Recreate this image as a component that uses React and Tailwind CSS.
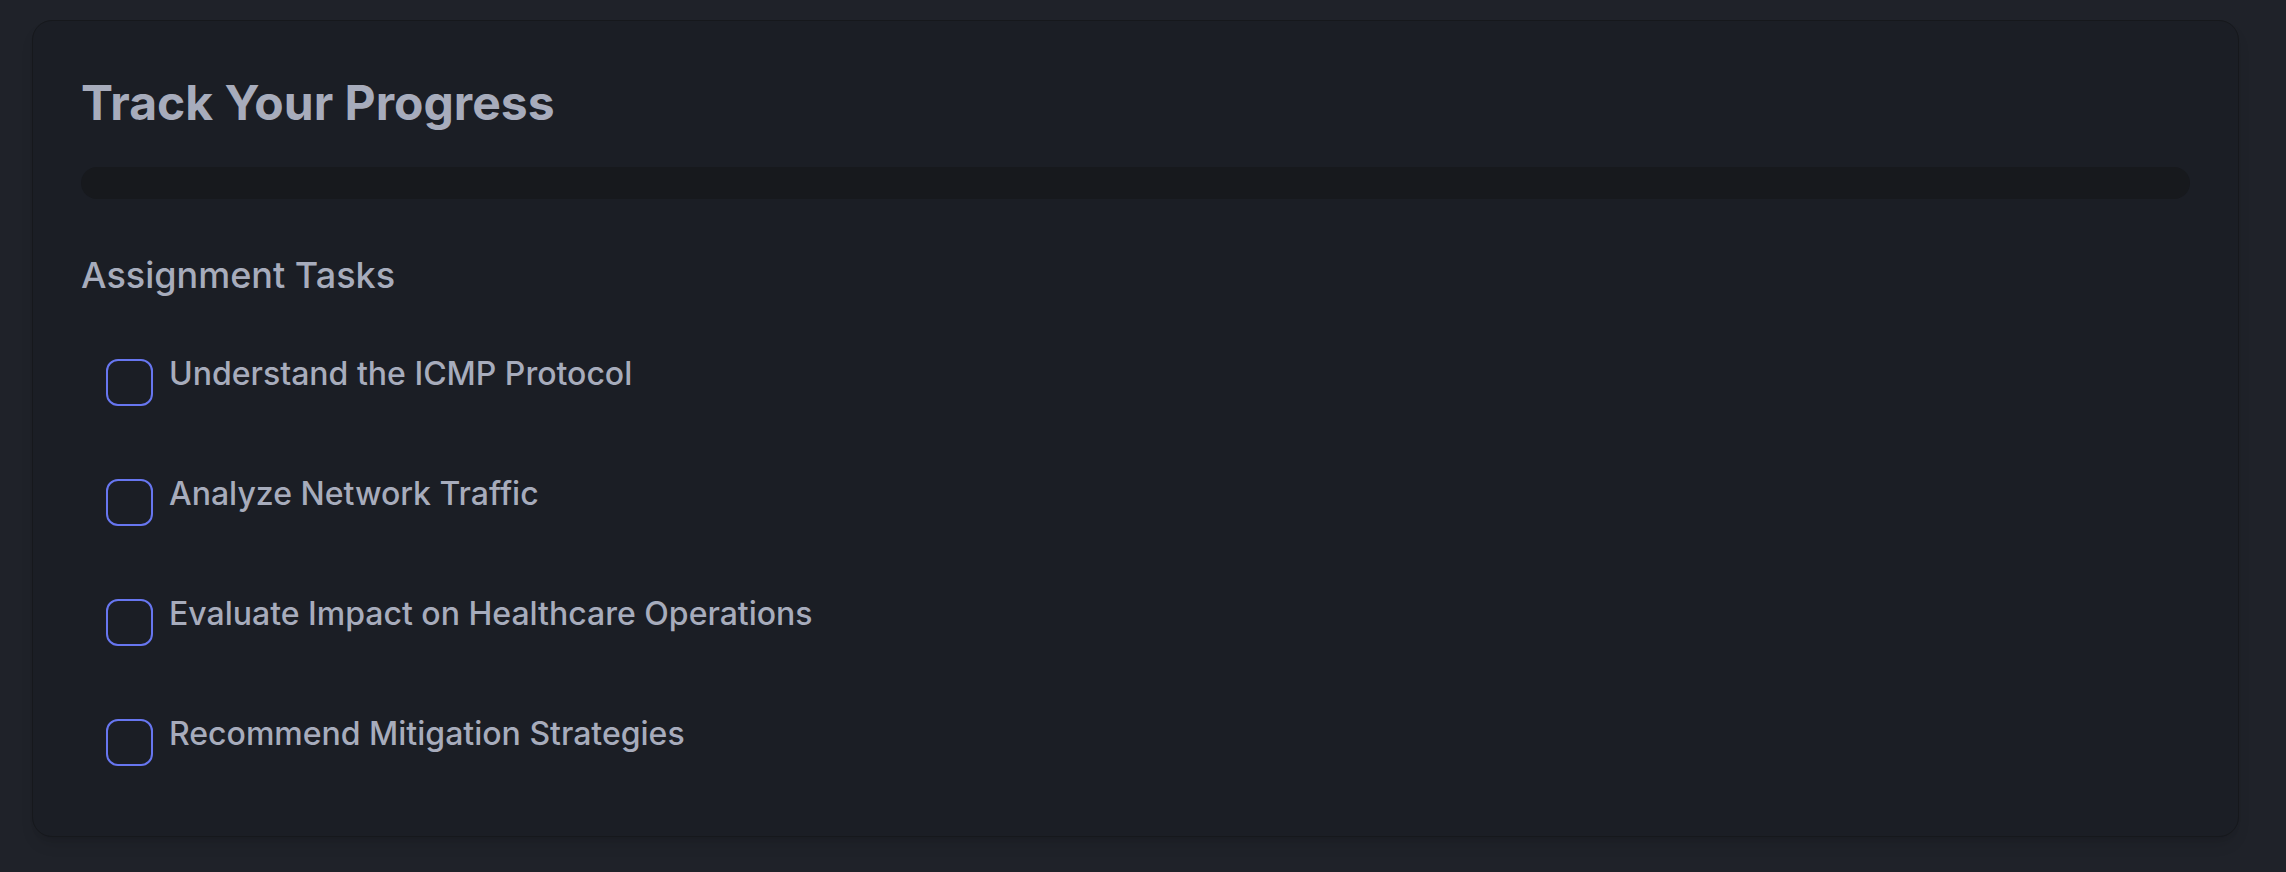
import { useState } from 'react';

const tasks = [
  'Understand the ICMP Protocol',
  'Analyze Network Traffic',
  'Evaluate Impact on Healthcare Operations',
  'Recommend Mitigation Strategies',
];

export default function App() {
  const [done, setDone] = useState({});

  const toggle = (i) => setDone((prev) => ({ ...prev, [i]: !prev[i] }));

  return (
    <div
      className="min-h-screen bg-[#1f2229] pt-5 pl-8 pr-[47px] pb-[34px]"
      style={{ fontFamily: 'Inter, "Noto Sans", sans-serif' }}
    >
      <div className="rounded-[20px] border border-[#16181c] bg-[#1b1e25] px-12 pt-12 pb-[46px] shadow-lg">
        <h1 className="mt-[10px] text-[48px] font-bold leading-none text-[#a7acbc]">Track Your Progress</h1>

        <div className="mt-10 h-8 w-full rounded-full bg-[#17191d]" />

        <h2 className="mt-14 text-[36px] font-medium leading-10 text-[#a7acbc]">Assignment Tasks</h2>

        <ul className="mt-10 flex flex-col gap-[25px]">
          {tasks.map((t, i) => (
            <li key={t} className="flex items-start gap-4 py-6 pl-[25px]">
              <button
                onClick={() => toggle(i)}
                className="h-[47px] w-[47px] shrink-0 rounded-xl border-2 border-[#6776f0] bg-transparent"
              >
                {done[i] && <span className="text-[#6776f0]">✓</span>}
              </button>
              <span className="-mt-[1px] text-[32px] font-medium leading-none text-[#a7acbc]">{t}</span>
            </li>
          ))}
        </ul>
      </div>
    </div>
  );
}
